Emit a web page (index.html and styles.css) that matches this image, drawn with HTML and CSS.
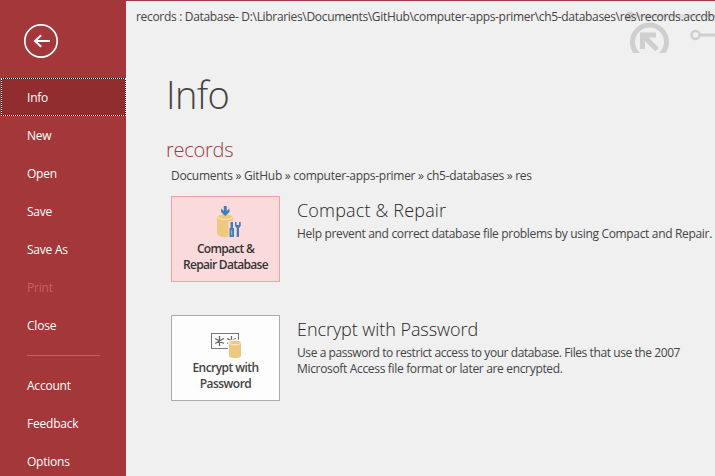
FILE: index.html
```html
<!DOCTYPE html>
<html lang="en">
<head>
<meta charset="utf-8">
<title>Info</title>
<link rel="stylesheet" href="styles.css">
</head>
<body>
<div class="app">
  <nav class="sidebar">
    <div class="back">
      <svg width="36" height="36" viewBox="0 0 36 36" fill="none" stroke="#fff">
        <circle cx="18" cy="18" r="16.2" stroke-width="1.7"/>
        <path d="M11.5 18H27M18.2 12.2L12 18L18.2 23.8" stroke-width="2"/>
      </svg>
    </div>
    <a class="item active">Info</a>
    <a class="item">New</a>
    <a class="item">Open</a>
    <a class="item">Save</a>
    <a class="item">Save As</a>
    <a class="item disabled">Print</a>
    <a class="item">Close</a>
    <div class="separator"></div>
    <a class="item">Account</a>
    <a class="item">Feedback</a>
    <a class="item">Options</a>
  </nav>
  <main class="main">
    <svg class="art" width="120" height="53" viewBox="0 0 120 53" fill="none" stroke="#cfcfcf">
      <circle cx="35" cy="16" r="4.5" fill="#d0d0d0" stroke="none"/>
      <path d="M35 16H120" stroke="#dadada" stroke-width="3"/>
      <circle cx="54.5" cy="42" r="17" stroke-width="5"/>
      <path d="M47.5 49V35H61M48 35.500L62 49.500" stroke-width="5"/>
      <circle cx="100.500" cy="35" r="4" stroke-width="2.500"/>
      <path d="M105 35H120" stroke-width="3"/>
    </svg>
    <div class="titlebar">records : Database- D:\Libraries\Documents\GitHub\computer-apps-primer\ch5-databases\res\records.accdb</div>
    <h1 class="page-title">Info</h1>
    <h2 class="db-name">records</h2>
    <p class="path">Documents » GitHub » computer-apps-primer » ch5-databases » res</p>
    <section class="row">
      <button class="tile tile-hot">
        <svg width="26" height="32" viewBox="0 0 26 32">
          <path d="M1 10.500V27C1 32.500 17 32.500 17 27V10.500Z" fill="#edc87e"/>
          <ellipse cx="9" cy="10.500" rx="7.500" ry="3" fill="#edc87e" stroke="#fbe9cf"/>
          <path d="M7.800 0H10.700V5L13.500 2.500V6L9.200 10L5 6V2.500L7.800 5Z" fill="#437db9"/>
          <path d="M12.500 15H26V32H12.500Z" fill="#fbdadc"/>
          <path d="M14.500 16H17V22H18V31H13.500V22H14.500ZM19 16H20.500V19H23V16H24.700V20L23 22V31H20.700V22L19 20Z" fill="#437db9"/>
          <path d="M15.700 24V29" stroke="#a9bfdc"/>
        </svg>
        <span class="cap">Compact &amp;</span><span class="cap">Repair Database</span>
      </button>
      <div class="info">
        <h3 class="h-compact">Compact &amp; Repair</h3>
        <p class="desc">Help prevent and correct database file problems by using Compact and Repair.</p>
      </div>
    </section>
    <section class="row second">
      <button class="tile">
        <svg class="pw" width="32" height="26" viewBox="0 0 32 26">
          <rect x="1.500" y=".5" width="27" height="15" fill="#fdfdfd" stroke="#777"/>
          <path d="M9.500 3V13M5.200 5.500L13.800 10.500M13.800 5.500L5.200 10.500M21.500 3V13M17.200 5.500L25.800 10.500M25.800 5.500L17.200 10.500" stroke="#666" stroke-width="1.300"/>
          <path d="M18 9C18 5.500 32 5.500 32 9V26H18Z" fill="#fdfdfd"/>
          <path d="M19 10V22.500C19 26 31 26 31 22.500V10Z" fill="#edc87e"/>
          <ellipse cx="25" cy="9.500" rx="6" ry="2.300" fill="#edc87e" stroke="#fdf4e4" stroke-width=".9"/>
        </svg>
        <span class="cap">Encrypt with</span><span class="cap">Password</span>
      </button>
      <div class="info">
        <h3 class="h-encrypt">Encrypt with Password</h3>
        <p class="desc"><span class="tight">Use a password to restrict access to your database. Files that use the 2007</span><br>Microsoft Access file format or later are encrypted.</p>
      </div>
    </section>
  </main>
</div>
</body>
</html>
```

FILE: styles.css
```css
* { box-sizing: border-box; }
body, h1, h2, h3, p { margin: 0; }
body {
  width: 715px;
  height: 476px;
  overflow: hidden;
  background: #f0f0f0;
  color: #444;
  font: 12px/16px "Open Sans", "Noto Sans", sans-serif;
}
.app { display: flex; height: 476px; }
.sidebar {
  width: 126px;
  flex: none;
  background: #a4373a;
  color: #fff;
}
.back { height: 78px; padding: 23px 0 0 23px; }
.back svg { display: block; }
.item {
  display: flex;
  align-items: center;
  height: 38px;
  padding: 2px 0 0 27px;
  letter-spacing: -.22px;
}
.active {
  margin-left: 1px;
  padding-left: 25px;
  background: linear-gradient(#912c2f, #912c2f) padding-box, #000 border-box;
  border: 1px dotted #fff;
}
.disabled { color: #cf6164; }
.separator { width: 73px; height: 1px; margin: 11px 0 10px 27px; background: #c75c60; }
.main {
  position: relative;
  flex: 1;
  min-width: 0;
  border-top: 1px solid #a4373a;
}
.art { position: absolute; top: -1px; right: 0; width: 120px; }
.titlebar {
  position: relative;
  height: 66px;
  padding: 8px 0 0 10px;
  white-space: nowrap;
  letter-spacing: -.32px;
}
.page-title { margin-left: 40px; font-size: 38px; line-height: 54px; font-weight: 300; letter-spacing: -.6px; }
.db-name { margin: 13px 0 0 40px; font-size: 20px; line-height: 32px; font-weight: 350; letter-spacing: -.25px; color: #a4373a; }
.path { margin: 2px 0 0 45px; letter-spacing: -.28px; }
.row { display: flex; margin: 12px 0 0 45px; height: 86px; gap: 17px; }
.second { margin-top: 33px; }
.tile {
  width: 109px;
  height: 86px;
  flex: none;
  display: flex;
  flex-direction: column;
  align-items: center;
  padding: 9px 0 0;
  border: 1px solid #ababab;
  background: #fdfdfd;
  color: #444;
  font: 600 12px/16px "Open Sans", "Noto Sans", sans-serif;
}
.tile-hot { background: #fbdadc; border-color: #f3a0a4; color: #333; }
.tile svg { flex: none; margin: 0 0 3px 7px; }
.tile .pw { margin: 8px 0 1px; }
.cap { white-space: nowrap; letter-spacing: -.7px; }
.tile:not(.tile-hot) .cap { letter-spacing: -.55px; }
.info { padding-top: 2px; white-space: nowrap; }
.desc { letter-spacing: -.33px; }
.tight { letter-spacing: -.42px; }
.info h3 { font-size: 18px; line-height: 24px; font-weight: 300; color: #262626; margin-bottom: 4px; }
.h-compact { letter-spacing: .17px; }
.h-encrypt { letter-spacing: -.06px; }
```
